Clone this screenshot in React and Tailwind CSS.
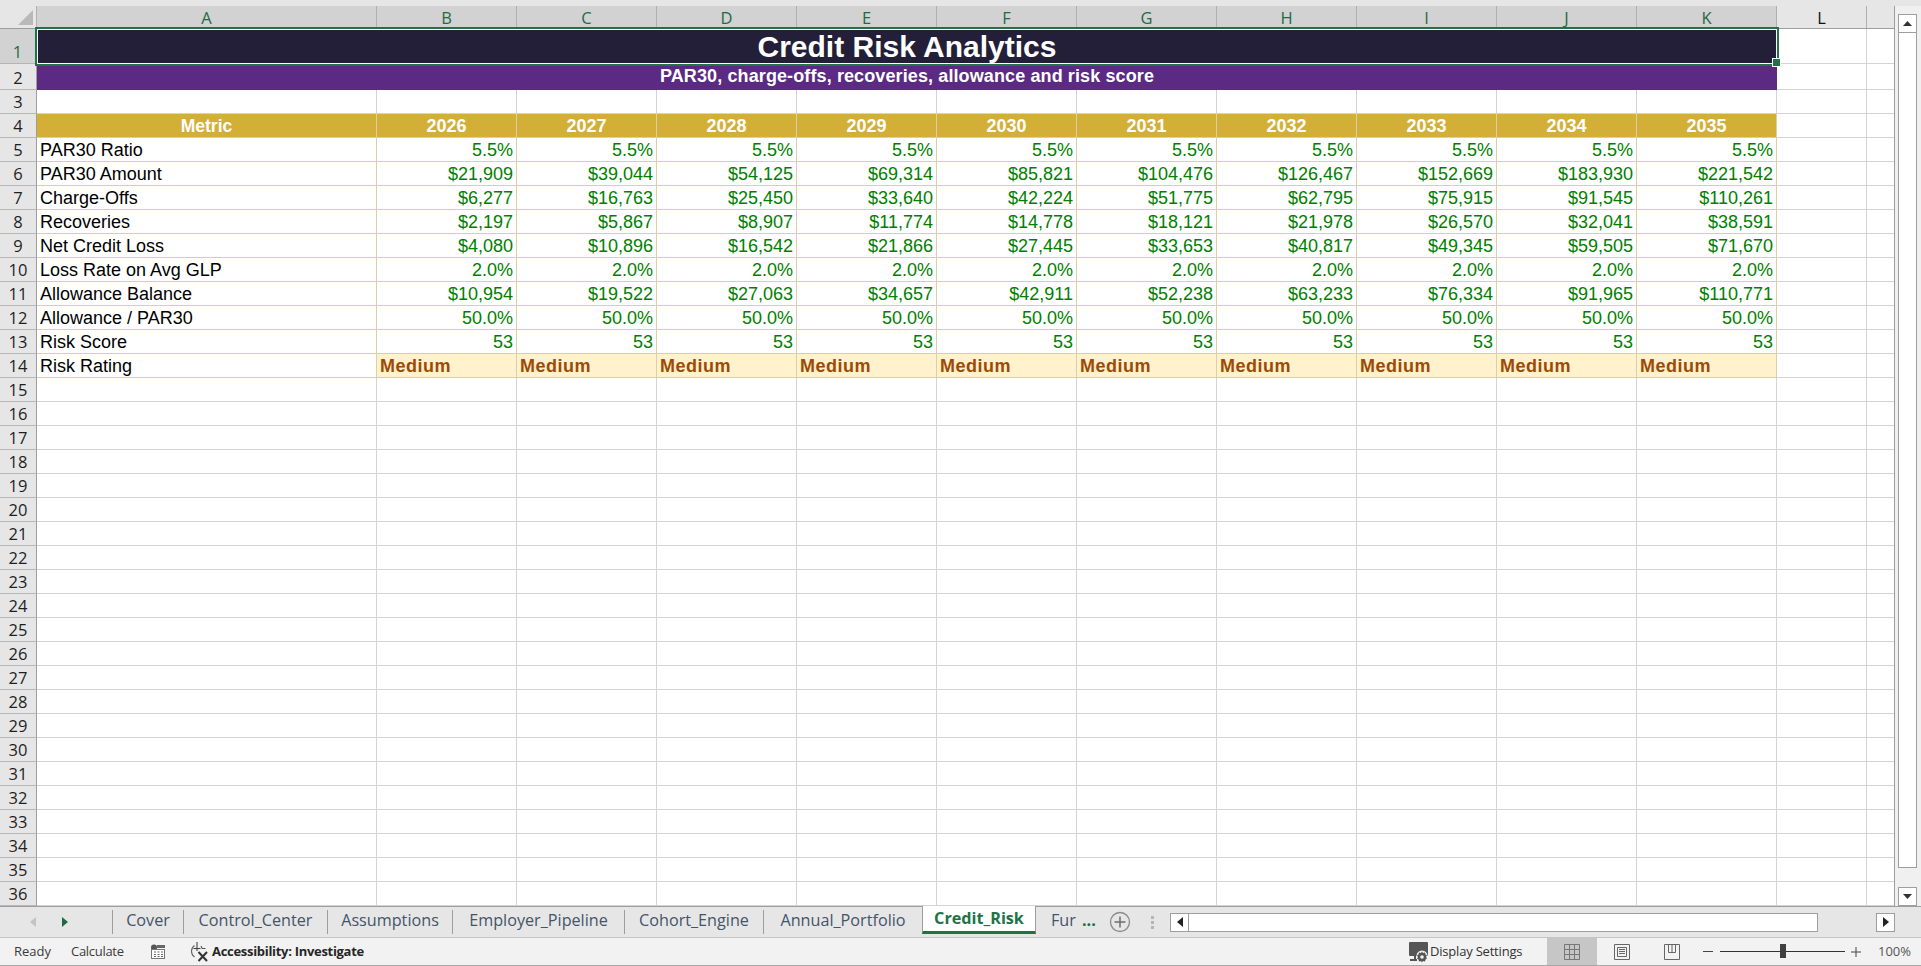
import React from "react";

const cols = ["B", "C", "D", "E", "F", "G", "H", "I", "J", "K"];
const years = [2026, 2027, 2028, 2029, 2030, 2031, 2032, 2033, 2034, 2035];
const rows = [
  ["PAR30 Ratio", ["5.5%", "5.5%", "5.5%", "5.5%", "5.5%", "5.5%", "5.5%", "5.5%", "5.5%", "5.5%"]],
  ["PAR30 Amount", ["$21,909", "$39,044", "$54,125", "$69,314", "$85,821", "$104,476", "$126,467", "$152,669", "$183,930", "$221,542"]],
  ["Charge-Offs", ["$6,277", "$16,763", "$25,450", "$33,640", "$42,224", "$51,775", "$62,795", "$75,915", "$91,545", "$110,261"]],
  ["Recoveries", ["$2,197", "$5,867", "$8,907", "$11,774", "$14,778", "$18,121", "$21,978", "$26,570", "$32,041", "$38,591"]],
  ["Net Credit Loss", ["$4,080", "$10,896", "$16,542", "$21,866", "$27,445", "$33,653", "$40,817", "$49,345", "$59,505", "$71,670"]],
  ["Loss Rate on Avg GLP", ["2.0%", "2.0%", "2.0%", "2.0%", "2.0%", "2.0%", "2.0%", "2.0%", "2.0%", "2.0%"]],
  ["Allowance Balance", ["$10,954", "$19,522", "$27,063", "$34,657", "$42,911", "$52,238", "$63,233", "$76,334", "$91,965", "$110,771"]],
  ["Allowance / PAR30", ["50.0%", "50.0%", "50.0%", "50.0%", "50.0%", "50.0%", "50.0%", "50.0%", "50.0%", "50.0%"]],
  ["Risk Score", ["53", "53", "53", "53", "53", "53", "53", "53", "53", "53"]],
];
const emptyRows = Array.from({ length: 22 }, (_, i) => i + 15);
const ui = "font-['Open_Sans',sans-serif]";
const sheet = "font-['Liberation_Sans',Arial,sans-serif]";
const tabs = [
  ["Cover", "w-[71px]"],
  ["Control_Center", "w-[144px]"],
  ["Assumptions", "w-[125px]"],
  ["Employer_Pipeline", "w-[172px]"],
  ["Cohort_Engine", "w-[139px]"],
  ["Annual_Portfolio", "w-[159px]"],
];

function RowNum({ n, h = "h-[24px]", sel = false }) {
  return (
    <div
      className={`${h} w-[37px] shrink-0 flex items-end justify-center border-r border-b leading-[23px] text-[16.5px] ${ui} ${
        sel
          ? "bg-[#d2d2d2] text-[#1f6b45] border-r-[#217346] border-b-[#b4b4b4] border-r-2"
          : "bg-[#e6e6e6] text-[#1f1f1f] border-r-[#9e9e9e] border-b-[#b8b8b8]"
      }`}
    >
      {n}
    </div>
  );
}

function BlankTail() {
  return (
    <>
      <div className="w-[90px] shrink-0 border-r border-b border-[#d4d4d4]" />
      <div className="w-[28px] shrink-0 border-b border-[#d4d4d4]" />
    </>
  );
}

function Row({ n, children }) {
  return (
    <div className="flex h-[24px]">
      <RowNum n={n} />
      {children}
      <BlankTail />
    </div>
  );
}

function ColumnHeaders() {
  return (
    <div className={`flex h-[22px] ${ui} text-[16.5px] leading-[24px]`}>
      <div className="w-[37px] shrink-0 bg-[#e6e6e6] border-r border-[#b0b0b0] relative">
        <svg className="absolute right-[3px] bottom-[3px]" width="15" height="15" viewBox="0 0 15 15">
          <polygon points="15,0 15,15 0,15" fill="#b9b9b9" />
        </svg>
      </div>
      <div className="w-[340px] shrink-0 bg-[#d2d2d2] text-[#1f6b45] text-center border-r border-[#b0b0b0]">A</div>
      {cols.map((c) => (
        <div key={c} className="w-[140px] shrink-0 bg-[#d2d2d2] text-[#1f6b45] text-center border-r border-[#b0b0b0]">
          {c}
        </div>
      ))}
      <div className="w-[90px] shrink-0 bg-[#e6e6e6] text-[#111] text-center border-r border-[#b0b0b0]">L</div>
      <div className="w-[28px] shrink-0 bg-[#e6e6e6]" />
    </div>
  );
}

function Grid() {
  return (
    <div className={`w-[1895px] shrink-0 bg-white ${sheet} text-[18px] border-r border-[#9e9e9e] overflow-hidden`}>
      <ColumnHeaders />
      <div className="h-[1px] w-[1895px] bg-[#9e9e9e] flex">
        <div className="w-[37px]" />
        <div className="w-[1740px] bg-[#217346]" />
      </div>
      {/* Row 1 */}
      <div className="flex h-[35px]">
        <RowNum n={1} h="h-[35px]" sel />
        <div className="relative w-[1740px] shrink-0 bg-[#231f38] text-white font-bold text-[30px] leading-[33px] text-center border border-white outline-2 outline-[#217346]">
          Credit Risk Analytics
          <div className="absolute right-[-5px] bottom-[-4px] w-[7px] h-[7px] bg-[#217346] border border-white box-content" />
        </div>
        <BlankTail />
      </div>
      {/* Row 2 */}
      <div className="flex h-[26px]">
        <RowNum n={2} h="h-[26px]" />
        <div className="w-[1740px] shrink-0 bg-[#5b2a82] text-white font-bold leading-[25px] text-center tracking-[0.11px]">
          PAR30, charge-offs, recoveries, allowance and risk score
        </div>
        <BlankTail />
      </div>
      {/* Row 3 */}
      <Row n={3}>
        <div className="w-[340px] shrink-0 border-r border-b border-[#d4d4d4]" />
        {cols.map((c) => (
          <div key={c} className="w-[140px] shrink-0 border-r border-b border-[#d4d4d4]" />
        ))}
      </Row>
      {/* Row 4 */}
      <Row n={4}>
        <div className="w-[340px] shrink-0 bg-[#d4af37] text-white font-bold text-center text-[17.5px] leading-[25px] border-r border-b border-[#dccfa8]">Metric</div>
        {years.map((y) => (
          <div key={y} className="w-[140px] shrink-0 bg-[#d4af37] text-white font-bold text-center leading-[25px] border-r border-b border-[#dccfa8]">
            {y}
          </div>
        ))}
      </Row>
      {/* Data */}
      {rows.map(([label, vals], i) => (
        <Row n={i + 5} key={label}>
          <div className="w-[340px] shrink-0 pl-[3px] text-black leading-[25px] border-r border-b border-[#dccfa8]">{label}</div>
          {vals.map((v, j) => (
            <div key={j} className="w-[140px] shrink-0 pr-[3px] text-right text-[#008000] leading-[25px] border-r border-b border-[#dccfa8]">
              {v}
            </div>
          ))}
        </Row>
      ))}
      {/* Rating */}
      <Row n={14}>
        <div className="w-[340px] shrink-0 pl-[3px] text-black leading-[25px] border-r border-b border-[#dccfa8]">Risk Rating</div>
        {cols.map((c) => (
          <div key={c} className="w-[140px] shrink-0 pl-[3px] bg-[#fff2cc] text-[#9c4a06] font-bold leading-[25px] tracking-[0.5px] border-r border-b border-[#dccfa8]">
            Medium
          </div>
        ))}
      </Row>
      {/* Empty */}
      {emptyRows.map((n) => (
        <Row n={n} key={n}>
          <div className="w-[340px] shrink-0 border-r border-b border-[#d4d4d4]" />
          {cols.map((c) => (
            <div key={c} className="w-[140px] shrink-0 border-r border-b border-[#d4d4d4]" />
          ))}
        </Row>
      ))}
    </div>
  );
}

function VScroll() {
  return (
    <div className="w-[26px] shrink-0 flex flex-col bg-[#f0f0f0] pl-[3px] pr-[4px] pt-[8px]">
      <div className="h-[19px] bg-white border border-[#9e9e9e] flex items-center justify-center">
        <svg width="9" height="5" viewBox="0 0 9 5"><polygon points="4.5,0 9,5 0,5" fill="#333" /></svg>
      </div>
      <div className="h-[835px] bg-white border border-t-0 border-[#9e9e9e]" />
      <div className="flex-1" />
      <div className="h-[19px] bg-white border border-[#9e9e9e] flex items-center justify-center">
        <svg width="9" height="5" viewBox="0 0 9 5"><polygon points="0,0 9,0 4.5,5" fill="#333" /></svg>
      </div>
    </div>
  );
}

function TabBar() {
  return (
    <div className={`h-[32px] flex bg-[#e6e6e6] border-b border-[#c6c6c6] ${ui} text-[16.2px] shrink-0`}>
      <div className="w-[112px] shrink-0 flex items-center pl-[30px] gap-[26px] border-t border-[#9e9e9e]">
        <svg width="6" height="10" viewBox="0 0 6 10"><polygon points="6,0 6,10 0,5" fill="#c4c4c4" /></svg>
        <svg width="6" height="10" viewBox="0 0 6 10"><polygon points="0,0 6,5 0,10" fill="#1f6b45" /></svg>
      </div>
      {tabs.map(([t, w]) => (
        <div key={t} className={`${w} shrink-0 h-full border-t border-[#9e9e9e] flex items-center`}>
          <div className="w-full h-[24px] pb-[4px] flex items-center justify-center text-[#44546a] leading-none border-l border-[#9e9e9e]">
            {t}
          </div>
        </div>
      ))}
      <div className="w-[114px] shrink-0 h-[28px] bg-white border-b-[3px] border-[#217346] border-x border-x-[#9e9e9e] flex items-center justify-center font-bold text-[#217346]">
        Credit_Risk
      </div>
      <div className="flex-1 border-t border-[#9e9e9e] flex items-center">
        <span className="ml-[15px] w-[26px] -mt-[4px] text-[#44546a]">Fur</span>
        <span className="ml-[5px] w-[20px] -mt-[4px] text-[#1f6b45] font-bold">...</span>
        <svg className="ml-[7px]" width="22" height="22" viewBox="0 0 22 22">
          <circle cx="11" cy="11" r="9.5" fill="none" stroke="#8a8a8a" strokeWidth="1.3" />
          <path d="M11 5.5v11M5.5 11h11" stroke="#6e6e6e" strokeWidth="1.5" />
        </svg>
        <div className="ml-[20px] w-[3px] flex flex-col gap-[2px]">
          <div className="h-[3px] bg-[#b5b5b5]" />
          <div className="h-[3px] bg-[#b5b5b5]" />
          <div className="h-[3px] bg-[#b5b5b5]" />
        </div>
        <div className="ml-[16px] w-[725px] h-[19px] flex shrink-0">
          <div className="w-[19px] bg-white border border-[#9e9e9e] flex items-center justify-center">
            <svg width="6" height="10" viewBox="0 0 6 10"><polygon points="6,0 6,10 0,5" fill="#222" /></svg>
          </div>
          <div className="w-[629px] bg-white border-y border-r border-[#9e9e9e]" />
          <div className="flex-1" />
          <div className="w-[19px] bg-white border border-[#9e9e9e] flex items-center justify-center">
            <svg width="6" height="10" viewBox="0 0 6 10"><polygon points="0,0 6,5 0,10" fill="#222" /></svg>
          </div>
        </div>
      </div>
    </div>
  );
}

function CalendarIcon() {
  return (
    <svg width="16" height="15" viewBox="0 0 16 15">
      <circle cx="4" cy="3.5" r="3" fill="#555" />
      <rect x="7" y="1" width="8" height="3" fill="#666" />
      <rect x="1.5" y="5.5" width="13" height="9" fill="#fff" stroke="#777" />
      <path d="M4 8h2M7.5 8h2M11 8h2M4 10.5h2M7.5 10.5h2M11 10.5h2M4 12.5h2M7.5 12.5h2M11 12.5h2" stroke="#666" />
    </svg>
  );
}

function AccessIcon() {
  return (
    <svg width="21" height="21" viewBox="0 0 21 21" fill="none">
      <path d="M5.5 4.5a7 7 0 0 0 0 11.5" stroke="#666" strokeWidth="1.1" />
      <path d="M8 1v9" stroke="#444" strokeWidth="1.1" />
      <path d="M4.5 7.5h7" stroke="#444" strokeWidth="1.1" />
      <path d="M12 5l1.2 2.5h3.3" stroke="#555" strokeWidth="1.1" />
      <path d="M9.5 11l8.5 9M18 11l-8.5 9" stroke="#333" strokeWidth="2" />
    </svg>
  );
}

function DisplayIcon() {
  return (
    <svg width="20" height="22" viewBox="0 0 20 22">
      <rect x="0" y="1" width="19" height="14" rx="1" fill="#555" />
      <rect x="5" y="15" width="2" height="4" fill="#555" />
      <rect x="1" y="18" width="7" height="2" fill="#555" />
      <circle cx="13" cy="15" r="5.5" fill="#f2f2f2" />
      <path d="M13 10.5l1 1.5 2-.5.5 2 1.5 1-1 1.5 1 1.5-1.5 1-.5 2-2-.5-1 1.5-1-1.5-2 .5-.5-2-1.5-1 1-1.5-1-1.5 1.5-1 .5-2 2 .5z" fill="#555" />
      <circle cx="13" cy="16" r="1.8" fill="#f2f2f2" />
    </svg>
  );
}

function StatusBar() {
  return (
    <div className={`h-[28px] flex items-center bg-[#f2f2f2] border-b border-[#a8a8a8] ${ui} text-[#3a3a3a] text-[13px] shrink-0`}>
      <span className="ml-[14px] w-[57px]">Ready</span>
      <span className="w-[79px] tracking-[-0.3px]">Calculate</span>
      <CalendarIcon />
      <div className="ml-[23px] -mt-[1px]"><AccessIcon /></div>
      <span className="ml-[2px] font-bold text-[#262626] tracking-[-0.3px]">Accessibility: Investigate</span>
      <div className="flex-1" />
      <DisplayIcon />
      <span className="ml-[1px] w-[117px] text-[#333] tracking-[-0.2px]">Display Settings</span>
      <div className="w-[50px] h-full bg-[#c6c6c6] flex items-center justify-center">
        <svg width="16" height="16" viewBox="0 0 16 16" fill="none" stroke="#777">
          <path d="M.5.5h15v15H.5zM5.5.5v15M10.5.5v15M.5 5.5h15M.5 10.5h15" />
        </svg>
      </div>
      <div className="w-[50px] flex justify-center">
        <svg width="16" height="16" viewBox="0 0 16 16" fill="none" stroke="#666">
          <path d="M.5.5h15v15H.5zM3.5 3.5h9v9h-9zM5 5.5h6M5 7.5h6M5 9.5h6" />
        </svg>
      </div>
      <div className="w-[49px] flex justify-center">
        <svg width="16" height="16" viewBox="0 0 16 16" fill="none" stroke="#666">
          <path d="M.5.5h15v15H.5zM4.5.5v8h7v-8M8 .5v8" />
        </svg>
      </div>
      <div className="ml-[7px] w-[10px] h-[1px] bg-[#444]" />
      <div className="ml-[7px] w-[125px] h-[1px] bg-[#333] relative">
        <div className="absolute left-[60px] top-[-7px] w-[6px] h-[14px] bg-[#404040]" />
      </div>
      <svg className="ml-[6px]" width="10" height="10" viewBox="0 0 10 10"><path d="M5 0v10M0 5h10" stroke="#444" /></svg>
      <span className="ml-[17px] w-[43px] text-[#555]">100%</span>
    </div>
  );
}

export default function App() {
  return (
    <div className="w-[1921px] h-[966px] flex flex-col overflow-hidden bg-[#e6e6e6]">
      <div className="h-[6px] shrink-0 bg-[#e6e6e6]" />
      <div className="h-[900px] shrink-0 flex overflow-hidden">
        <Grid />
        <VScroll />
      </div>
      <TabBar />
      <StatusBar />
    </div>
  );
}
